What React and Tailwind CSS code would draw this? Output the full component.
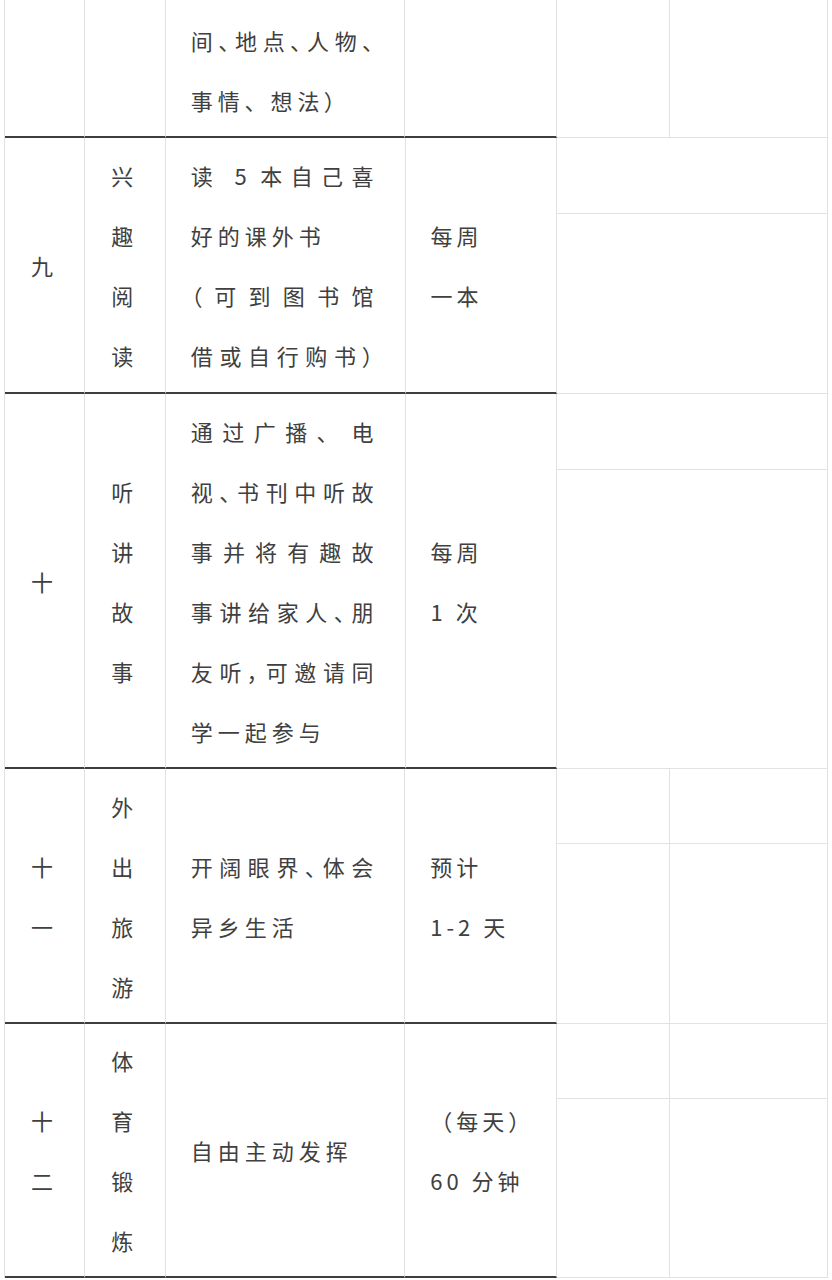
import React from 'react';

const DARK = 'border-b-2 border-b-[#3d3d3d]';
const FONT = { fontFamily: '"Noto Sans CJK SC", "Noto Sans", sans-serif' };

// one line of cell text; justified lines stretch to the cell width
function Line({ text, justify }) {
    if (justify) {
        return <div className="text-justify [text-align-last:justify] whitespace-nowrap">{text}</div>;
    }
    return <div className="tracking-[5px] whitespace-nowrap">{text}</div>;
}

function Stack({ chars }) {
    return (
        <div className="flex flex-col items-center tracking-[5px]">
            {chars.split('').map((c, i) => <div key={i}>{c}</div>)}
        </div>
    );
}

function RightCells({ split, top }) {
    const cell = 'border-r border-b border-[#e2e2e2]';
    if (split) {
        return (
            <div className="flex flex-col w-[271px]">
                <div className={`flex shrink-0 ${top}`}>
                    <div className={`w-[113px] ${cell}`} />
                    <div className={`w-[158px] ${cell}`} />
                </div>
                <div className="flex flex-1">
                    <div className={`w-[113px] ${cell}`} />
                    <div className={`w-[158px] ${cell}`} />
                </div>
            </div>
        );
    }
    return (
        <div className="flex flex-col w-[271px]">
            <div className={`shrink-0 ${top} ${cell}`} />
            <div className={`flex-1 ${cell}`} />
        </div>
    );
}

function Row({ height, top, split, num, name, desc, freq }) {
    const light = 'border-r border-r-[#e2e2e2]';
    return (
        <div className={`flex ${height}`}>
            <div className={`w-[80px] flex items-center justify-center ${light} ${DARK}`}>
                <Stack chars={num} />
            </div>
            <div className={`w-[81px] flex items-center justify-center ${light} ${DARK}`}>
                <Stack chars={name} />
            </div>
            <div className={`w-[240px] flex flex-col justify-center pl-[25px] pr-[31px] [font-feature-settings:'palt'] ${light} ${DARK}`}>
                {desc.map((l, i) => <Line key={i} text={l[0]} justify={l[1]} />)}
            </div>
            <div className={`w-[152px] flex flex-col justify-center pl-[25px] tracking-[4px] ${light} ${DARK}`}>
                {freq.map((l, i) => <div key={i} className="whitespace-nowrap">{l}</div>)}
            </div>
            <RightCells split={split} top={top} />
        </div>
    );
}

export default function App() {
    const light = 'border-r border-r-[#e2e2e2]';
    return (
        <div className="w-[832px] min-h-[1280px] bg-white text-[#404040] text-[22px] leading-[60px]" style={FONT}>
            <div className="ml-[4px] w-[824px] border-l border-l-[#e2e2e2]">
                {/* tail of row 八, cut off at the top */}
                <div className="flex h-[138px]">
                    <div className={`w-[80px] ${light} ${DARK}`} />
                    <div className={`w-[81px] ${light} ${DARK}`} />
                    <div className={`w-[240px] flex flex-col justify-end pl-[25px] pr-[31px] pb-[6px] [font-feature-settings:'palt'] ${light} ${DARK}`}>
                        <Line text="间、地点、人物、" justify />
                        <Line text="事情、 想法）" />
                    </div>
                    <div className={`w-[152px] ${light} ${DARK}`} />
                    <div className="flex w-[271px]">
                        <div className="w-[113px] border-r border-b border-[#e2e2e2]" />
                        <div className="w-[158px] border-r border-b border-[#e2e2e2]" />
                    </div>
                </div>

                <Row
                    height="h-[256px]"
                    top="h-[76px]"
                    num="九"
                    name="兴趣阅读"
                    desc={[['读 5 本自己喜', true], ['好的课外书', false], ['（可到图书馆', true], ['借或自行购书）', true]]}
                    freq={['每周', '一本']}
                />
                <Row
                    height="h-[375px]"
                    top="h-[76px]"
                    num="十"
                    name="听讲故事"
                    desc={[
                        ['通过广播、 电', true],
                        ['视、书刊中听故', true],
                        ['事并将有趣故', true],
                        ['事讲给家人、朋', true],
                        ['友听，可邀请同', true],
                        ['学一起参与', false],
                    ]}
                    freq={['每周', '1 次']}
                />
                <Row
                    height="h-[255px]"
                    top="h-[75px]"
                    split
                    num="十一"
                    name="外出旅游"
                    desc={[['开阔眼界、体会', true], ['异乡生活', false]]}
                    freq={['预计', '1-2 天']}
                />
                <Row
                    height="h-[254px]"
                    top="h-[75px]"
                    split
                    num="十二"
                    name="体育锻炼"
                    desc={[['自由主动发挥', false]]}
                    freq={['（每天）', '60 分钟']}
                />
            </div>
        </div>
    );
}
